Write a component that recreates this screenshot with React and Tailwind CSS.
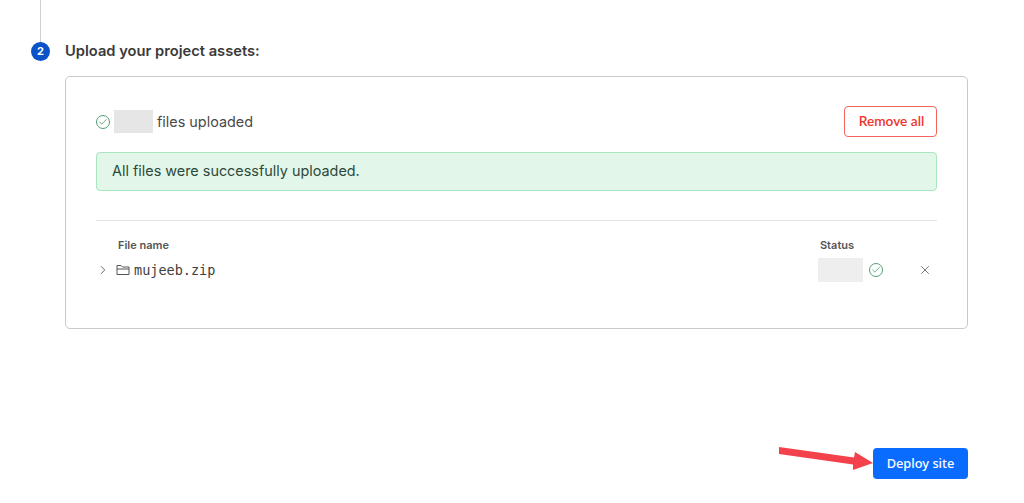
import { Check, ChevronRight, X } from 'lucide-react';

const CheckBadge = ({ className }) => (
    <span className={`flex items-center justify-center rounded-full border-[1.5px] border-[#4f9f72] w-[14px] h-[14px] ${className || ''}`}>
        <Check className="text-[#4f9f72]" size={10} strokeWidth={2} />
    </span>
);

const App = () => {
    return (
        <div className="relative w-[1024px] h-[503px] overflow-hidden bg-white font-['Inter',sans-serif] flex">
            {/* step marker */}
            <div className="w-[65px] flex flex-col items-center pl-[31px] pr-[15px] shrink-0">
                <div className="w-px h-[42px] bg-[#d0d0d0]"></div>
                <div className="w-[19px] h-[19px] rounded-full bg-[#0a52c7] text-white text-[11px] font-bold flex items-center justify-center shrink-0">
                    2
                </div>
            </div>

            <div className="w-[903px] flex flex-col">
                <h2 className="mt-[41px] h-[20px] leading-[20px] text-[14.7px] font-semibold text-[#3a3a3a]">Upload your project assets:</h2>

                <div className="mt-[15px] h-[253px] border border-[#c9c9c9] rounded-[5px] px-[30px] pt-[29px]">
                    <div className="flex items-center h-[31px]">
                        <CheckBadge />
                        <div className="ml-[4px] w-[39px] h-[23px] bg-[#e6e6e6]"></div>
                        <span className="ml-[4px] text-[14.4px] text-[#4a4a4a]">files uploaded</span>
                        <button className="ml-auto w-[93px] h-[31px] pl-[2px] border border-[#f4635c] rounded-[4px] text-[#f0352c] text-[13.7px] font-['Lato',sans-serif] font-semibold">
                            Remove all
                        </button>
                    </div>

                    <div className="mt-[15px] h-[39px] flex items-center px-[15px] pb-px bg-[#e3f6ea] border border-[#a8e6bf] rounded-[4px] text-[14.4px] text-[#2c4a3a]">
                        All files were successfully uploaded.
                    </div>

                    <div className="mt-[29px] border-t border-[#e2e2e2] pt-[17px]">
                        <div className="flex h-[15px] items-center text-[11px] font-semibold text-[#555555]">
                            <span className="ml-[22px]">File name</span>
                            <span className="ml-[651px]">Status</span>
                        </div>
                        <div className="flex items-center h-[24px] mt-[5px]">
                            <ChevronRight className="text-[#555555]" size={14} strokeWidth={1.5} />
                            <svg className="ml-[6px] text-[#555555]" width="14" height="14" viewBox="0 0 14 14" fill="none" stroke="currentColor" strokeWidth="1">
                                <path d="M1 11.5 V2.5 H5 L6.5 4 H13 V11.5 Z" />
                                <path d="M1 6 H13" />
                            </svg>
                            <span className="ml-[4px] font-['DejaVu_Sans_Mono',monospace] text-[13.5px] text-[#3f3f3f]">mujeeb.zip</span>
                            <div className="ml-[603px] w-[45px] h-[24px] bg-[#eeeeee]"></div>
                            <CheckBadge className="ml-[6px]" />
                            <X className="text-[#666666] ml-[35px]" size={14} strokeWidth={1.5} />
                        </div>
                    </div>
                </div>

                <div className="mt-[119px] flex justify-end">
                    <button className="w-[95px] h-[31px] rounded-[4px] bg-[#0a6cff] text-white text-[12.8px] font-['Noto_Sans',sans-serif] font-medium">
                        Deploy site
                    </button>
                </div>
            </div>

            {/* annotation arrow */}
            <svg className="absolute left-[778px] top-[445px]" width="96" height="32" viewBox="0 0 96 32">
                <path d="M1 2 L76 12.5 L77 7 L95 18 L75 25 L75 19.5 L1 9 Z" fill="#f4424c" />
            </svg>
        </div>
    );
};

export default App;
